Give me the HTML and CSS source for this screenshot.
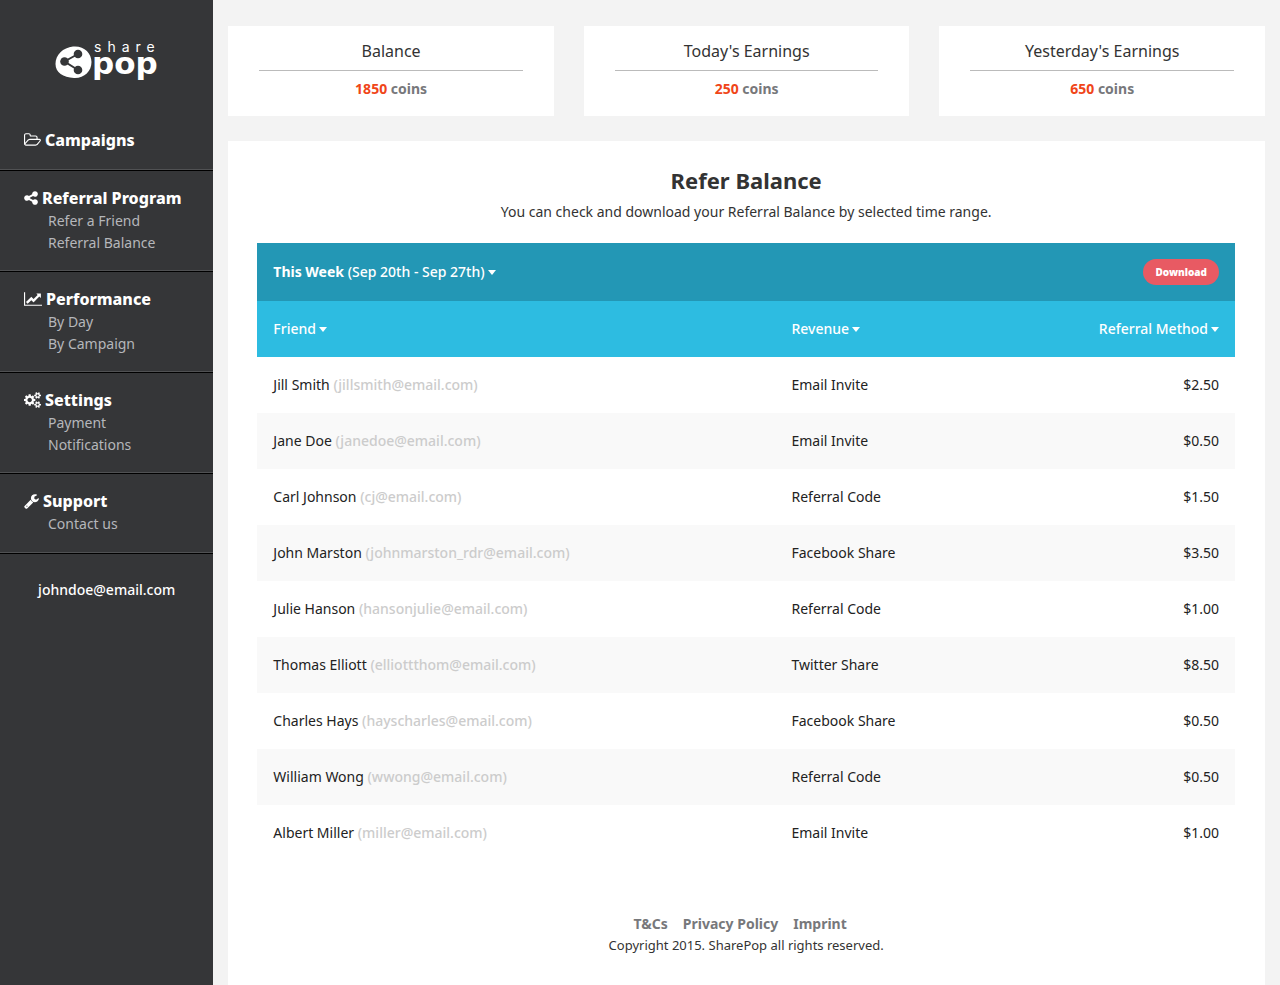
FILE: index.html
```html
<!DOCTYPE html>
<html lang="en">
<head>
<meta charset="utf-8">
<meta name="viewport" content="width=device-width, initial-scale=1">
<title>SharePop - Refer Balance</title>
<link rel="stylesheet" href="styles.css">
</head>
<body>
<div class="layout">
  <aside class="sidebar">
    <a class="logo" href="#">
      <svg class="logo-art" viewBox="0 0 106 44" role="img" aria-label="share pop">
        <path class="logo-blob" d="M19 6.500C30 5.500 37.500 13 37.500 22C37.500 31.500 30 38.500 20 38C9 37.500 1.500 32.500 1.500 24C1.500 15 9 7.500 19 6.500Z"/>
        <path class="logo-link" d="M24 14L10.500 21.500L24 30"/>
        <circle class="logo-node" cx="24" cy="14" r="4.300"/>
        <circle class="logo-node" cx="10.500" cy="21.500" r="4.300"/>
        <circle class="logo-node" cx="24" cy="30" r="4.300"/>
        <text class="logo-share" x="40" y="12">share</text>
        <text class="logo-pop" x="38" y="34">pop</text>
      </svg>
    </a>
    <nav class="menu">
      <section class="menu-group">
        <h2 class="menu-title"><a href="#"><svg class="icon" viewBox="64 0 1920 1792" width="17" height="16" aria-hidden="true"><path d="M1845 931q0-35-53-35h-1088q-40 0-85.500 21.500t-71.500 52.500l-294 363q-18 24-18 40 0 35 53 35h1088q40 0 86-22t71-53l294-363q18-22 18-39zm-1141-163h768v-160q0-40-28-68t-68-28h-576q-40 0-68-28t-28-68v-64q0-40-28-68t-68-28h-320q-40 0-68 28t-28 68v853l256-315q44-53 116-87.500t140-34.500zm1269 163q0 62-46 120l-295 363q-43 53-116 87.500t-140 34.500h-1088q-92 0-158-66t-66-158v-960q0-92 66-158t158-66h320q92 0 158 66t66 158v32h544q92 0 158 66t66 158v160h192q54 0 99 24.500t67 70.500q15 32 15 68z"/></svg>Campaigns</a></h2>
      </section>
      <section class="menu-group">
        <h2 class="menu-title"><svg class="icon" viewBox="128 0 1536 1792" width="14" height="16" aria-hidden="true"><path d="M1344 1024q133 0 226.500 93.500t93.500 226.500-93.500 226.500-226.500 93.500-226.500-93.500-93.500-226.500q0-12 2-34l-360-180q-92 86-218 86-133 0-226.500-93.500t-93.500-226.500 93.500-226.500 226.500-93.500q126 0 218 86l360-180q-2-22-2-34 0-133 93.500-226.500t226.500-93.500 226.500 93.500 93.500 226.500-93.500 226.500-226.500 93.500q-126 0-218-86l-360 180q2 22 2 34t-2 34l360 180q92-86 218-86z"/></svg>Referral Program</h2>
        <ul class="menu-list">
          <li><a href="#">Refer a Friend</a></li>
          <li><a href="#">Referral Balance</a></li>
        </ul>
      </section>
      <section class="menu-group">
        <h2 class="menu-title"><svg class="icon" viewBox="0 0 2048 1792" width="18" height="16" aria-hidden="true"><path d="M2048 1536v128h-2048v-1536h128v1408h1920zM1920 288v435q0 21-19.500 29.500t-35.500-7.500l-121-121-633 633q-10 10-23 10t-23-10l-233-233-416 416-192-192 585-585q10-10 23-10t23 10l233 233 464-464-121-121q-16-16-7.500-35.500t29.500-19.500h435q14 0 23 9t9 23z"/></svg>Performance</h2>
        <ul class="menu-list">
          <li><a href="#">By Day</a></li>
          <li><a href="#">By Campaign</a></li>
        </ul>
      </section>
      <section class="menu-group">
        <h2 class="menu-title"><svg class="icon" viewBox="0 0 1920 1792" width="17" height="16" aria-hidden="true"><path d="M896 896q0-106-75-181t-181-75-181 75-75 181 75 181 181 75 181-75 75-181zm768 512q0-52-38-90t-90-38-90 38-38 90q0 53 37.500 90.500t90.500 37.500 90.500-37.500 37.500-90.500zm0-1024q0-52-38-90t-90-38-90 38-38 90q0 53 37.500 90.500t90.500 37.500 90.500-37.500 37.500-90.500zm-384 421v185q0 10-7 19.500t-16 10.500l-155 24q-11 35-32 76 34 48 90 115 7 11 7 20 0 12-7 19-23 30-82.500 89.500t-78.500 59.500q-11 0-21-7l-115-90q-37 19-77 31-11 108-23 155-7 24-30 24h-186q-11 0-20-7.500t-10-17.500l-23-153q-34-10-75-31l-118 89q-7 7-20 7-11 0-21-8-144-133-144-160 0-9 7-19 10-14 41-53t47-61q-23-44-35-82l-152-24q-10-1-17-9.500t-7-19.500v-185q0-10 7-19.500t16-10.500l155-24q11-35 32-76-34-48-90-115-7-11-7-20 0-12 7-20 22-30 82-89t79-59q11 0 21 7l115 90q34-18 77-32 11-108 23-154 7-24 30-24h186q11 0 20 7.500t10 17.500l23 153q34 10 75 31l118-89q8-7 20-7 11 0 21 8 144 133 144 160 0 8-7 19-12 16-42 54t-45 60q23 48 34 82l152 23q10 2 17 10.500t7 19.500zm640 533v140q0 16-149 31-12 27-30 52 51 113 51 138 0 4-4 7-122 71-124 71-8 0-46-47t-52-68q-20 2-30 2t-30-2q-14 21-52 68t-46 47q-2 0-124-71-4-3-4-7 0-25 51-138-18-25-30-52-149-15-149-31v-140q0-16 149-31 13-29 30-52-51-113-51-138 0-4 4-7 4-2 35-20t59-34 30-16q8 0 46 46.500t52 67.500q20-2 30-2t30 2q51-71 92-112l6-2q4 0 124 70 4 3 4 7 0 25-51 138 17 23 30 52 149 15 149 31zm0-1024v140q0 16-149 31-12 27-30 52 51 113 51 138 0 4-4 7-122 71-124 71-8 0-46-47t-52-68q-20 2-30 2t-30-2q-14 21-52 68t-46 47q-2 0-124-71-4-3-4-7 0-25 51-138-18-25-30-52-149-15-149-31v-140q0-16 149-31 13-29 30-52-51-113-51-138 0-4 4-7 4-2 35-20t59-34 30-16q8 0 46 46.500t52 67.500q20-2 30-2t30 2q51-71 92-112l6-2q4 0 124 70 4 3 4 7 0 25-51 138 17 23 30 52 149 15 149 31z"/></svg>Settings</h2>
        <ul class="menu-list">
          <li><a href="#">Payment</a></li>
          <li><a href="#">Notifications</a></li>
        </ul>
      </section>
      <section class="menu-group">
        <h2 class="menu-title"><svg class="icon" viewBox="64 0 1664 1792" width="15" height="16" aria-hidden="true"><path d="M448 1472q0-26-19-45t-45-19-45 19-19 45 19 45 45 19 45-19 19-45zm644-420l-682 682q-37 37-90 37-52 0-91-37l-106-108q-38-36-38-90 0-53 38-91l681-681q39 98 114.500 173.500t173.500 114.500zm634-435q0 39-23 106-47 134-164.500 217.500t-258.500 83.500q-185 0-316.500-131.500t-131.500-316.500 131.500-316.500 316.500-131.500q58 0 121.500 16.500t107.500 46.500q16 11 16 28t-16 28l-293 169v224l193 107q5-3 79-48.500t135.500-81 70.500-35.500q15 0 23.500 10t8.500 25z"/></svg>Support</h2>
        <ul class="menu-list">
          <li><a href="#">Contact us</a></li>
        </ul>
      </section>
    </nav>
    <a class="account" href="#">johndoe@email.com</a>
  </aside>

  <main class="content">
    <div class="cards">
      <section class="card">
        <h2 class="card-title">Balance</h2>
        <p class="card-value"><span class="amount">1850</span> coins</p>
      </section>
      <section class="card">
        <h2 class="card-title">Today's Earnings</h2>
        <p class="card-value"><span class="amount">250</span> coins</p>
      </section>
      <section class="card">
        <h2 class="card-title">Yesterday's Earnings</h2>
        <p class="card-value"><span class="amount">650</span> coins</p>
      </section>
    </div>

    <div class="panel">
      <h1 class="panel-title">Refer Balance</h1>
      <p class="panel-text">You can check and download your Referral Balance by selected time range.</p>
      <div class="toolbar">
        <button class="plain-button" type="button"><strong>This Week</strong> (Sep 20th - Sep 27th)<span class="caret"></span></button>
        <button class="download" type="button">Download</button>
      </div>
      <table class="balance">
        <thead>
          <tr>
            <th class="col-friend"><button class="plain-button" type="button">Friend<span class="caret"></span></button></th>
            <th><button class="plain-button" type="button">Revenue<span class="caret"></span></button></th>
            <th class="end"><button class="plain-button" type="button">Referral Method<span class="caret"></span></button></th>
          </tr>
        </thead>
        <tbody>
          <tr><td>Jill Smith <span class="mail">(jillsmith@email.com)</span></td><td>Email Invite</td><td class="end">$2.50</td></tr>
          <tr><td>Jane Doe <span class="mail">(janedoe@email.com)</span></td><td>Email Invite</td><td class="end">$0.50</td></tr>
          <tr><td>Carl Johnson <span class="mail">(cj@email.com)</span></td><td>Referral Code</td><td class="end">$1.50</td></tr>
          <tr><td>John Marston <span class="mail">(johnmarston_rdr@email.com)</span></td><td>Facebook Share</td><td class="end">$3.50</td></tr>
          <tr><td>Julie Hanson <span class="mail">(hansonjulie@email.com)</span></td><td>Referral Code</td><td class="end">$1.00</td></tr>
          <tr><td>Thomas Elliott <span class="mail">(elliottthom@email.com)</span></td><td>Twitter Share</td><td class="end">$8.50</td></tr>
          <tr><td>Charles Hays <span class="mail">(hayscharles@email.com)</span></td><td>Facebook Share</td><td class="end">$0.50</td></tr>
          <tr><td>William Wong <span class="mail">(wwong@email.com)</span></td><td>Referral Code</td><td class="end">$0.50</td></tr>
          <tr><td>Albert Miller <span class="mail">(miller@email.com)</span></td><td>Email Invite</td><td class="end">$1.00</td></tr>
        </tbody>
      </table>
      <footer class="footer">
        <nav class="footer-links">
          <a href="#">T&amp;Cs</a>
          <a href="#">Privacy Policy</a>
          <a href="#">Imprint</a>
        </nav>
        <p class="copyright">Copyright 2015. SharePop all rights reserved.</p>
      </footer>
    </div>
  </main>
</div>
</body>
</html>
```
FILE: styles.css
```css
* {
  box-sizing: border-box;
}

body {
  margin: 0;
  background: #f3f3f3;
  color: #333;
  font: 14px/22px "Noto Sans", "Open Sans", sans-serif;
}

h1, h2, p, ul {
  margin: 0;
  padding: 0;
}

a {
  color: inherit;
  text-decoration: none;
}

.layout {
  display: grid;
  grid-template-columns: 1fr 5fr;
  min-height: 100vh;
}

.sidebar {
  display: flex;
  flex-direction: column;
  background: #353638;
  color: #fff;
}

.logo {
  display: flex;
  justify-content: center;
  padding: 40px 0 29px;
}

.logo-art {
  width: 106px;
  height: 44px;
  overflow: visible;
}

.logo-blob {
  fill: #fff;
}

.logo-link {
  fill: none;
  stroke: #353638;
  stroke-width: 2;
}

.logo-node {
  fill: #353638;
}

.logo-share {
  fill: #fff;
  font: 14px "Inter", sans-serif;
  letter-spacing: 6px;
}

.logo-pop {
  fill: #fff;
  font: 700 31px "DejaVu Sans", sans-serif;
}

.menu-group {
  padding: 15px 8px 17px 24px;
  border-bottom: 1px solid #000;
  box-shadow: inset 0 -1px #505153;
}

.menu-title {
  font-size: 16px;
  line-height: 24px;
  font-weight: 800;
}

.icon {
  margin-right: 4px;
  vertical-align: -2px;
  fill: currentColor;
}

.menu-list {
  padding-left: 24px;
  color: #b5b7bb;
  list-style: none;
}

.menu-group:first-child,
.menu-group:last-child {
  padding-bottom: 18px;
}

.account {
  padding: 25px 8px;
  font-weight: 500;
  text-align: center;
}

.content {
  display: flex;
  flex-direction: column;
  gap: 25px;
  padding: 26px 15px 0;
}

.cards {
  display: grid;
  grid-template-columns: repeat(3, 1fr);
  gap: 30px;
}

.card {
  padding: 14px 31px 16px;
  background: #fff;
  text-align: center;
}

.card-title {
  padding-bottom: 8px;
  border-bottom: 1px solid #bbb;
  font-size: 16px;
  font-weight: 400;
}

.card-value {
  padding-top: 7px;
  color: #77787b;
  font-weight: 700;
}

.amount {
  color: #f04518;
}

.panel {
  flex: 1;
  padding: 24px 30px 24px 29px;
  background: #fff;
}

.panel-title {
  font-size: 22px;
  line-height: 30px;
  text-align: center;
}

.panel-text {
  padding: 6px 0 20px;
  text-align: center;
}

.toolbar {
  display: flex;
  align-items: center;
  justify-content: space-between;
  padding: 16px;
  background: #2397b5;
}

.plain-button {
  padding: 0;
  border: 0;
  background: none;
  color: #fff;
  font: inherit;
  font-weight: 500;
}

.plain-button strong {
  font-weight: 700;
}

.caret {
  display: inline-block;
  margin-left: 3px;
  border: 4px solid transparent;
  border-top: 5px solid #fff;
  border-bottom: 0;
  vertical-align: 2px;
}

.download {
  padding: 0 12px;
  border: 0;
  border-radius: 13px;
  background: #e85a63;
  color: #fff;
  font: 900 10px/26px "Noto Sans", sans-serif;
}

.balance {
  width: 100%;
  border-collapse: collapse;
  color: #222;
}

.balance th,
.balance td {
  padding: 17px 16px;
  text-align: left;
}

.balance th {
  background: #2dbce1;
}

.balance .col-friend {
  width: 53%;
}

.balance .end {
  text-align: right;
}

.balance tbody tr:nth-child(even) {
  background: #f9f9f9;
}

.mail {
  color: #ccc;
  font-weight: 500;
}

.footer {
  padding-top: 52px;
  text-align: center;
}

.footer-links {
  display: flex;
  justify-content: center;
  gap: 15px;
  padding-right: 12px;
  color: #77787b;
  font-weight: 700;
}

.copyright {
  font-size: 13px;
  line-height: 20px;
}
```
